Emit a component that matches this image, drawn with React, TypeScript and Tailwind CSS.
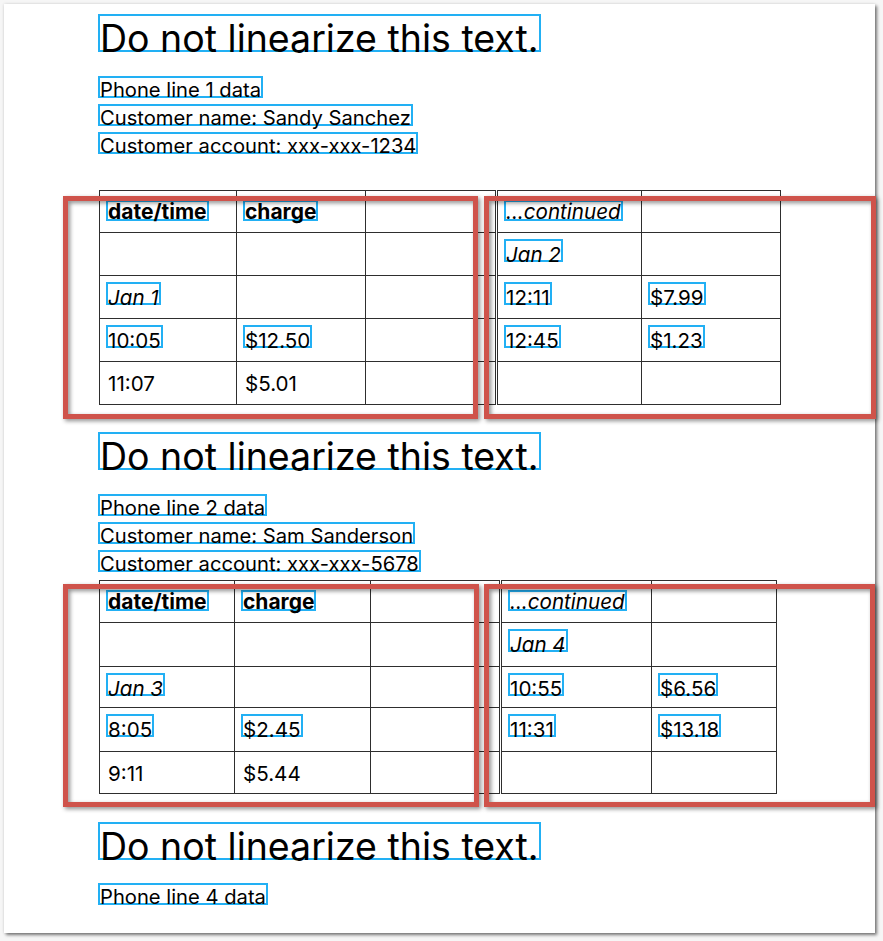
import type { ReactNode } from 'react';

type Cell = { t?: string; kind?: 'bold' | 'italic' | 'plain'; box?: boolean };

type TableSpec = {
  cols: string;
  rows: string;
  cells: Cell[][];
};

const font = { fontFamily: 'Inter, "Noto Sans", sans-serif' };

// tables for phone line 1
const line1Left: TableSpec = {
  cols: 'grid-cols-[137px_129px_130px]',
  rows: 'grid-rows-[42px_43px_43px_43px_43px]',
  cells: [
    [{ t: 'date/time', kind: 'bold', box: true }, { t: 'charge', kind: 'bold', box: true }, {}],
    [{}, {}, {}],
    [{ t: 'Jan 1', kind: 'italic', box: true }, {}, {}],
    [{ t: '10:05', box: true }, { t: '$12.50', box: true }, {}],
    [{ t: '11:07' }, { t: '$5.01' }, {}],
  ],
};

const line1Right: TableSpec = {
  cols: 'grid-cols-[144px_139px]',
  rows: 'grid-rows-[42px_43px_43px_43px_43px]',
  cells: [
    [{ t: '...continued', kind: 'italic', box: true }, {}],
    [{ t: 'Jan 2', kind: 'italic', box: true }, {}],
    [{ t: '12:11', box: true }, { t: '$7.99', box: true }],
    [{ t: '12:45', box: true }, { t: '$1.23', box: true }],
    [{}, {}],
  ],
};

// tables for phone line 2
const line2Left: TableSpec = {
  cols: 'grid-cols-[135px_136px_129px]',
  rows: 'grid-rows-[42px_44px_41px_44px_42px]',
  cells: [
    [{ t: 'date/time', kind: 'bold', box: true }, { t: 'charge', kind: 'bold', box: true }, {}],
    [{}, {}, {}],
    [{ t: 'Jan 3', kind: 'italic', box: true }, {}, {}],
    [{ t: '8:05', box: true }, { t: '$2.45', box: true }, {}],
    [{ t: '9:11' }, { t: '$5.44' }, {}],
  ],
};

const line2Right: TableSpec = {
  cols: 'grid-cols-[150px_125px]',
  rows: 'grid-rows-[42px_44px_41px_44px_42px]',
  cells: [
    [{ t: '...continued', kind: 'italic', box: true }, {}],
    [{ t: 'Jan 4', kind: 'italic', box: true }, {}],
    [{ t: '10:55', box: true }, { t: '$6.56', box: true }],
    [{ t: '11:31', box: true }, { t: '$13.18', box: true }],
    [{}, {}],
  ],
};

function Heading() {
  return (
    <div className="flex">
      <span className="h-[38px] border-2 border-[#22b0f4] text-[37.5px] leading-[46px] whitespace-nowrap">
        Do not linearize this text.
      </span>
    </div>
  );
}

function Line({ children }: { children: ReactNode }) {
  return (
    <div className="flex h-[28px]">
      <span className="h-[22px] border-2 border-[#22b0f4] text-[20.2px] leading-[24px] whitespace-nowrap">
        {children}
      </span>
    </div>
  );
}

function CellView({ cell, header }: { cell: Cell; header: boolean }) {
  const style =
    cell.kind === 'bold' ? 'font-bold text-[21px]' : cell.kind === 'italic' ? 'italic text-[20.6px]' : 'text-[20.6px]';
  const edge = cell.box ? 'border-[#22b0f4]' : 'border-transparent';
  return (
    <div className={`flex border-r border-b border-[#2e2e2e] pl-[6px] ${header ? 'pt-[9px]' : 'pt-[6px]'}`}>
      {cell.t && (
        <span
          className={`border-2 ${edge} ${style} whitespace-nowrap ${
            header ? 'h-[21px] leading-[20px]' : 'h-[23px] leading-[27px]'
          }`}
        >
          {cell.t}
        </span>
      )}
    </div>
  );
}

function Table({ spec }: { spec: TableSpec }) {
  return (
    <div className={`grid ${spec.cols} ${spec.rows} border-l border-t border-[#2e2e2e]`}>
      {spec.cells.map((row, r) =>
        row.map((cell, c) => <CellView key={`${r}-${c}`} cell={cell} header={r === 0} />)
      )}
    </div>
  );
}

function RedBox({ className }: { className: string }) {
  return (
    <div
      className={`absolute border-[5px] border-[#cf534b] drop-shadow-[2px_2px_2px_rgba(0,0,0,0.45)] ${className}`}
    />
  );
}

export default function App() {
  return (
    <div className="w-[883px] h-[941px] bg-[#f6f6f6] pt-[4px] pl-[4px] text-black" style={font}>
      <div className="w-[871px] h-[929px] bg-white pl-[94px] shadow-[2px_2px_3px_rgba(0,0,0,0.5),0_0_3px_rgba(0,0,0,0.12)]">
        {/* phone line 1 */}
        <div className="pt-[10px]">
          <Heading />
        </div>
        <div className="mt-[24px]">
          <Line>Phone line 1 data</Line>
          <Line>Customer name: Sandy Sanchez</Line>
          <Line>Customer account: xxx-xxx-1234</Line>
        </div>
        <div className="relative ml-[1px] mt-[30px] flex gap-[1px]">
          <Table spec={line1Left} />
          <Table spec={line1Right} />
          <RedBox className="left-[-36px] top-[6px] w-[415px] h-[223px]" />
          <RedBox className="left-[385px] top-[6px] w-[392px] h-[223px]" />
        </div>

        {/* phone line 2 */}
        <div className="mt-[27px]">
          <Heading />
        </div>
        <div className="mt-[24px]">
          <Line>Phone line 2 data</Line>
          <Line>Customer name: Sam Sanderson</Line>
          <Line>Customer account: xxx-xxx-5678</Line>
        </div>
        <div className="relative ml-[1px] mt-[2px] flex gap-[1px]">
          <Table spec={line2Left} />
          <Table spec={line2Right} />
          <RedBox className="left-[-36px] top-[4px] w-[416px] h-[223px]" />
          <RedBox className="left-[385px] top-[4px] w-[391px] h-[223px]" />
        </div>

        {/* phone line 4 */}
        <div className="mt-[28px]">
          <Heading />
        </div>
        <div className="mt-[23px]">
          <Line>Phone line 4 data</Line>
        </div>
      </div>
    </div>
  );
}
